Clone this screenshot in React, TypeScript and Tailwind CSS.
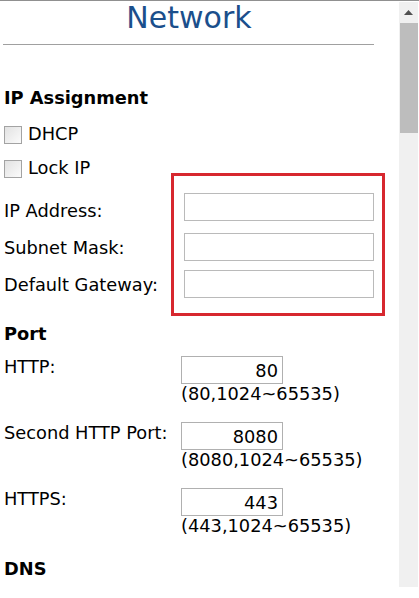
import React from "react";

const IP_ROWS = [
  { label: "IP Address:", gap: "mt-0", labelTop: "mt-[8px]" },
  { label: "Subnet Mask:", gap: "mt-[12px]", labelTop: "mt-[5px]" },
  { label: "Default Gateway:", gap: "mt-[9px]", labelTop: "mt-[5px]" },
];

const PORTS = [
  { label: "HTTP:", value: "80", hint: "(80,1024~65535)", gap: "mt-[12px]" },
  { label: "Second HTTP Port:", value: "8080", hint: "(8080,1024~65535)", gap: "mt-[18px]" },
  { label: "HTTPS:", value: "443", hint: "(443,1024~65535)", gap: "mt-[18px]" },
];

function Checkbox() {
  return (
    <div className="mt-[2px] w-[18px] h-[18px] shrink-0 border border-[#a3a3a3] bg-linear-to-br from-[#e2e2e2] to-[#fbfbfb]" />
  );
}

function Scrollbar() {
  return (
    <div className="mt-px w-[19px] h-[585px] shrink-0 bg-[#f0f0f0] flex flex-col">
      <div className="h-[21px] flex items-center justify-center">
        <svg width="9" height="5" viewBox="0 0 9 5">
          <path d="M0 5 L4.5 0 L9 5 Z" fill="#505050" />
        </svg>
      </div>
      <div className="ml-px w-[18px] h-[110px] bg-[#bdbdbd]" />
    </div>
  );
}

export default function App() {
  return (
    <div className="w-[419px] h-[598px] bg-white border-t border-[#909090] flex overflow-hidden font-['DejaVu_Sans',Verdana,sans-serif] text-black">
      <div className="w-[399px] shrink-0 flex flex-col pl-[4px] text-[17.8px] leading-[20px]">
        {/* ── Header ─────────────────────────────────────────── */}
        <h1 className="w-[370px] text-center text-[30px] leading-[34px] text-[#1b4f8c]">Network</h1>
        <div className="mt-[9px] w-[371px] -ml-px h-px bg-[#a0a0a0]" />

        {/* ── IP Assignment ──────────────────────────────────── */}
        <h2 className="mt-[43px] font-bold text-[17.8px] leading-[20px]">IP Assignment</h2>

        <label className="mt-[16px] flex items-start gap-[6px]">
          <Checkbox />
          <span>DHCP</span>
        </label>
        <label className="mt-[14px] flex items-start gap-[6px]">
          <Checkbox />
          <span>Lock IP</span>
        </label>

        <div className="relative mt-[15px] flex flex-col">
          {IP_ROWS.map((row) => (
            <div key={row.label} className={`${row.gap} flex items-start`}>
              <span className={`${row.labelTop} w-[180px] shrink-0`}>{row.label}</span>
              <input
                readOnly
                className="w-[190px] h-[28px] border border-[#bababa] bg-white outline-none"
              />
            </div>
          ))}
          {/* red highlight drawn over the address fields */}
          <div className="absolute left-[167px] top-[-20px] w-[214px] h-[143px] border-[3px] border-[#d7282f] pointer-events-none" />
        </div>

        {/* ── Port ───────────────────────────────────────────── */}
        <h2 className="mt-[26px] font-bold text-[17.8px] leading-[20px]">Port</h2>

        {PORTS.map((p) => (
          <div key={p.label} className={`${p.gap} flex items-start`}>
            <span className="mt-px w-[177px] shrink-0">{p.label}</span>
            <div className="flex flex-col">
              <input
                readOnly
                defaultValue={p.value}
                className="w-[102px] h-[28px] border border-[#b0b0b0] bg-white text-right pr-[4px] outline-none"
              />
              <span>{p.hint}</span>
            </div>
          </div>
        ))}

        {/* ── DNS ────────────────────────────────────────────── */}
        <h2 className="mt-[23px] font-bold text-[17.8px] leading-[20px]">DNS</h2>
      </div>
      <Scrollbar />
    </div>
  );
}
